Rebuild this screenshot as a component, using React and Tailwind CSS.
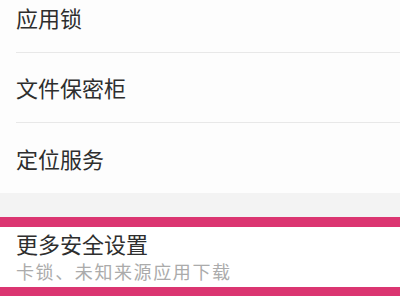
import React from "react";

const font = { fontFamily: '"Noto Sans CJK SC", "Noto Sans", sans-serif' };

const Row = ({ label, divider = true }) => (
  <div className="h-[70px] flex flex-col">
    <div className="flex-1 flex items-center pl-4 text-[22px] text-[#2e2e2e]">{label}</div>
    {divider && <div className="ml-4 h-px bg-[#e8e8e8]" />}
  </div>
);

export default function App() {
  return (
    <div className="w-[400px] h-[300px] overflow-hidden bg-[#fdfdfd] flex flex-col" style={font}>
      <div className="-mt-[17px]">
        <Row label="应用锁" />
        <Row label="文件保密柜" />
        <Row label="定位服务" divider={false} />
      </div>
      <div className="h-[24px] bg-[#f3f3f3]" />
      <div className="h-[10px] bg-[#db3571]" />
      <div className="h-[60px] pl-4 pt-[1px] flex flex-col bg-white">
        <div className="text-[22px] leading-[30px] text-[#2e2e2e]">更多安全设置</div>
        <div className="text-[18px] leading-[26px] text-[#ababab] tracking-[1.6px]">卡锁、未知来源应用下载</div>
      </div>
      <div className="h-[9px] bg-[#db3571]" />
      <div className="flex-1 bg-white" />
    </div>
  );
}
